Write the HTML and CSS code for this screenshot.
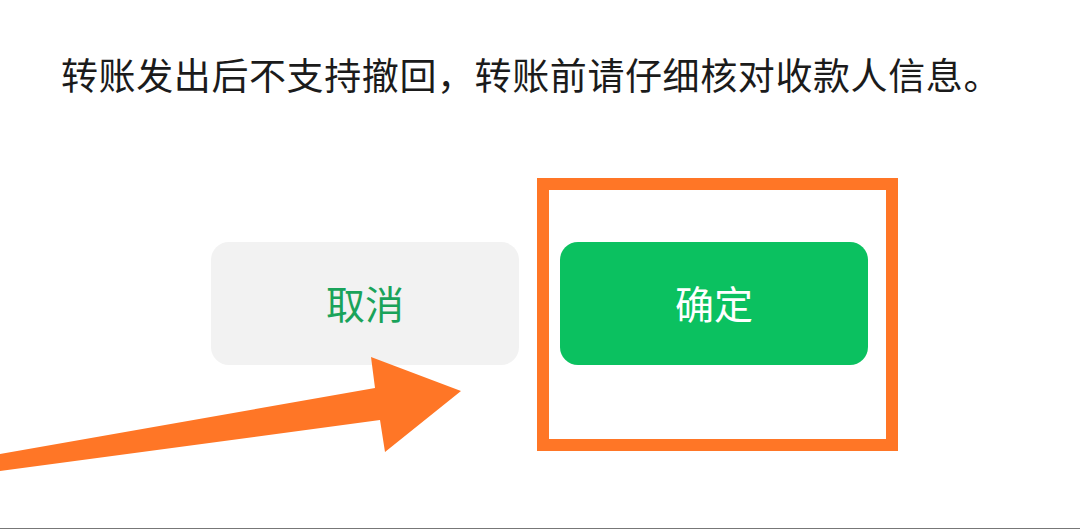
FILE: index.html
```html
<!DOCTYPE html>
<html lang="zh-CN">
<head>
<meta charset="utf-8">
<link rel="stylesheet" href="styles.css">
</head>
<body>
<div class="page">
  <p class="notice">转账发出后不支持撤回，转账前请仔细核对收款人信息。</p>
  <div class="actions">
    <button class="btn btn-cancel">取消</button>
    <button class="btn btn-ok">确定</button>
  </div>
  <div class="highlight"></div>
  <svg class="arrow" width="470" height="480" viewBox="0 0 470 480">
    <polygon points="0,454 375,388 371,357 461,391 385,452 380,420 0,471" fill="#ff7626"/>
  </svg>
</div>
</body>
</html>
```
FILE: styles.css
```css
html, body {
  margin: 0;
  padding: 0;
  background: #ffffff;
}
.page {
  position: relative;
  width: 1080px;
  height: 529px;
  box-sizing: border-box;
  border-bottom: 1px solid #777777;
  overflow: hidden;
  font-family: "Noto Sans CJK SC", "Noto Sans", sans-serif;
}
.notice {
  margin: 0;
  padding: 48px 0 0 61px;
  font-size: 37px;
  letter-spacing: 0.6px;
  line-height: 52px;
  color: #1b1b1b;
  white-space: nowrap;
}
.actions {
  display: flex;
  gap: 41px;
  margin-top: 142px;
  padding-left: 211px;
}
.btn {
  width: 308px;
  height: 123px;
  border: none;
  border-radius: 18px;
  font-family: "Noto Sans CJK SC", "Noto Sans", sans-serif;
  font-size: 39px;
  padding: 0 0 4px 0;
  box-sizing: border-box;
  display: flex;
  align-items: center;
  justify-content: center;
}
.btn-cancel {
  background: #f2f2f2;
  color: #1aa35a;
}
.btn-ok {
  background: #0bc160;
  color: #ffffff;
}
.highlight {
  position: absolute;
  left: 537px;
  top: 178px;
  width: 361px;
  height: 273px;
  box-sizing: border-box;
  border: 12.5px solid #ff7626;
}
.arrow {
  position: absolute;
  left: 0;
  top: 0;
}
```
